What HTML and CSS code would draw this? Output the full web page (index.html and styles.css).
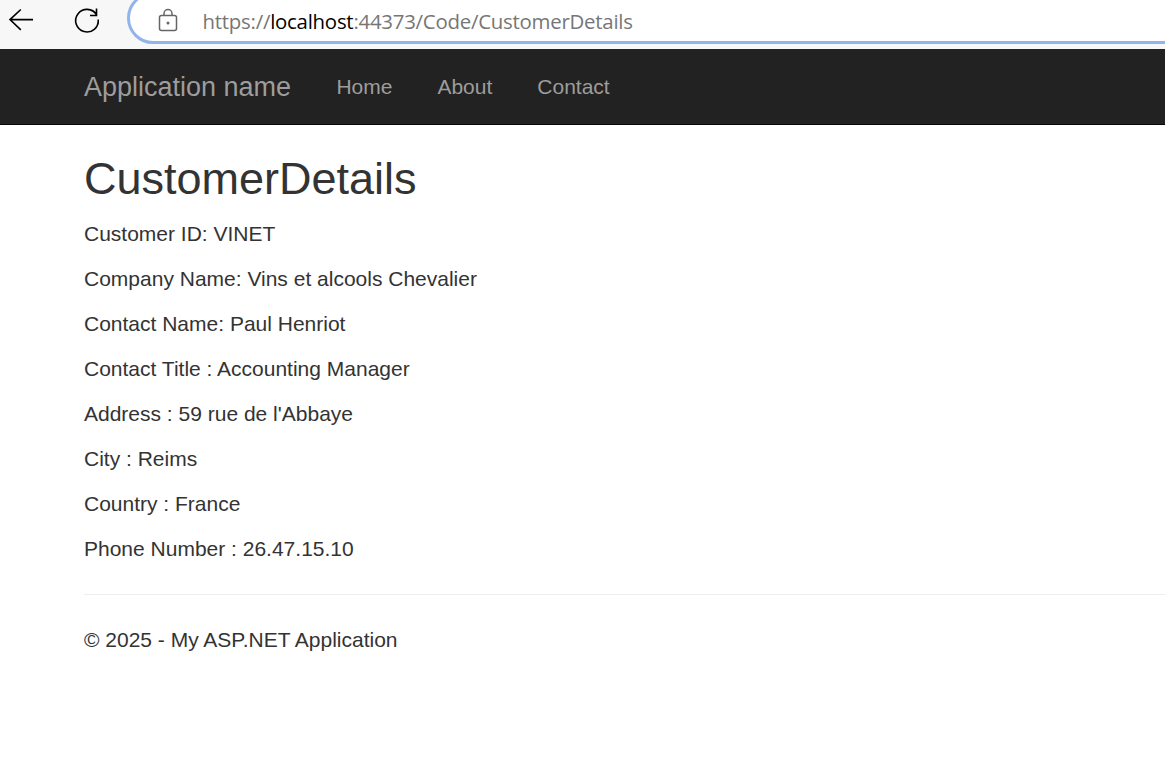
FILE: index.html
```html
<!DOCTYPE html>
<html lang="en">
<head>
<meta charset="utf-8">
<title>CustomerDetails</title>
<link rel="stylesheet" href="styles.css">
</head>
<body>
<div class="toolbar">
  <svg class="icon back" width="26" height="26" viewBox="0 0 26 26"><path d="M25 12.600H2M12.800 2.500L2 12.600l10.800 10.200"/></svg>
  <svg class="icon reload" width="26" height="26" viewBox="0 0 26 26"><path d="M22.600 6.800A11.300 11.300 0 1 0 24.200 11.500M22.500 .5v7h-6.500"/></svg>
  <div class="address">
    <svg class="icon lock" width="20" height="24" viewBox="0 0 20 24"><rect x="1.500" y="7.500" width="17" height="15" rx="2"/><path d="M6 7.500V5.500a4 4 0 0 1 8 0v2"/><circle cx="10" cy="15" r="1.500"/></svg>
    <span class="url">https://<b>localhost</b>:44373/Code/CustomerDetails</span>
  </div>
</div>
<nav class="navbar">
  <a class="brand">Application name</a>
  <a class="link">Home</a>
  <a class="link">About</a>
  <a class="link">Contact</a>
</nav>
<main class="content">
  <h2>CustomerDetails</h2>
  <p>Customer ID: VINET</p>
  <p>Company Name: Vins et alcools Chevalier</p>
  <p>Contact Name: Paul Henriot</p>
  <p>Contact Title : Accounting Manager</p>
  <p>Address : 59 rue de l'Abbaye</p>
  <p>City : Reims</p>
  <p>Country : France</p>
  <p>Phone Number : 26.47.15.10</p>
  <hr>
  <footer><p>© 2025 - My ASP.NET Application</p></footer>
</main>
</body>
</html>
```
FILE: styles.css
```css
* { box-sizing: border-box; }
body { margin: 0; background: #fff; color: #333; font: 21px/30px "Liberation Sans", Arial, sans-serif; overflow: hidden; }
.toolbar { height: 49px; background: #f7f7f7; display: flex; align-items: flex-start; padding-left: 8px; }
.icon { flex: none; fill: none; stroke: #000; stroke-width: 1.600; }
.back { margin-top: 7px; }
.reload { margin: 8px 0 0 40px; overflow: visible; }
.address { flex: 1; height: 52px; margin: -8px -40px 0 27px; border: 3px solid #92b4ec; border-radius: 26px; background: #fff; display: flex; align-items: center; padding: 4px 0 0 28px; }
.lock { stroke: #666; stroke-width: 1.500; }
.lock circle { fill: #666; stroke: none; }
.url { margin-left: 24.500px; padding-top: 1px; font: 20.400px/30px "Open Sans", "Noto Sans", sans-serif; letter-spacing: -0.240px; color: #767676; white-space: nowrap; }
.url b { font-weight: 400; color: #000; }
.navbar { height: 76px; background: #222; border-bottom: 1px solid #080808; display: flex; align-items: center; padding-left: 84px; color: #9d9d9d; }
.brand { font-size: 27px; width: 252.400px; }
.link { margin-right: 45px; }
.content { padding-left: 84px; }
h2 { margin: 29px 0 16px; font-size: 45px; line-height: 49px; font-weight: 400; }
p { margin: 0 0 15px; }
hr { margin: 30px 0; border: 0; border-top: 1px solid #eee; }
```
